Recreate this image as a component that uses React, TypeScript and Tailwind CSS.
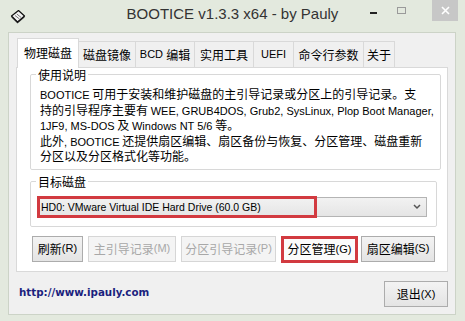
import type { ReactNode } from "react"

const cjk = "font-['Noto_Sans_CJK_SC','Noto_Sans',sans-serif]"

// latin runs are narrower in the original (Tahoma-ish), so give them their own face
const L = ({ children }: { children: ReactNode }) => (
  <span className="font-['Liberation_Sans',sans-serif] text-[11px]">{children}</span>
)

const tabs: { label: ReactNode; w: string; active?: boolean }[] = [
  { label: "物理磁盘", w: "w-[62px]", active: true },
  { label: "磁盘镜像", w: "w-[58px]" },
  { label: <><L>BCD&nbsp;</L>编辑</>, w: "w-[60px]" },
  { label: "实用工具", w: "w-[60px]" },
  { label: <L>UEFI</L>, w: "w-[41px]" },
  { label: "命令行参数", w: "w-[71px]" },
  { label: "关于", w: "w-[32px]" },
]

const DiskIcon = () => (
  <svg width="16" height="16" viewBox="0 0 16 16">
    <path d="M1.5 8.5 L7.5 14.5 L14.5 8.5 L14.5 7 L8.5 1.5 L1.5 7 Z" fill="#3a3a3a" />
    <path d="M1.5 7 L8.5 1.5 L14.5 7 L7.5 13 Z" fill="#f4f4f4" stroke="#111" strokeWidth="1.2" strokeLinejoin="round" />
    <path d="M5 6.5 L9.5 10 M6.8 5 L11.2 8.5" stroke="#777" strokeWidth="1" />
  </svg>
)

const TitleBar = () => (
  <div className="grid h-[32px] grid-cols-[1fr_auto_1fr] items-center">
    <div className="pl-[10px] pt-[1px]">
      <DiskIcon />
    </div>
    <div className="font-['Liberation_Sans',sans-serif] text-[15px] text-[#333] -mt-[3px]">
      BOOTICE v1.3.3 x64 - by Pauly
    </div>
    <div className="flex h-full items-start justify-end pr-[7px]">
      <div className="flex h-[21px] w-[27px] items-center justify-center">
        <div className="mt-[5px] h-[2px] w-[7px] bg-[#222]" />
      </div>
      <div className="mr-[17px] flex h-[21px] w-[28px] items-center justify-center">
        <div className="-mt-[1px] h-[7px] w-[9px] border border-[#9a9a9a]" />
      </div>
      <div className="flex h-[21px] w-[26px] items-center justify-center bg-[#c7c7c7]">
        <svg width="9" height="9" viewBox="0 0 9 9">
          <path d="M1 1 L8 8 M8 1 L1 8" stroke="#fff" strokeWidth="1.6" />
        </svg>
      </div>
    </div>
  </div>
)

const Tabs = () => (
  <div className="relative z-10 flex h-[29px] items-end pl-[1px]">
    {tabs.map((t, i) =>
      t.active ? (
        <div
          key={i}
          className={`${t.w} -mb-px flex h-[30px] items-center justify-center border border-b-0 border-[#d9d9d9] bg-white pb-[2px]`}
        >
          {t.label}
        </div>
      ) : (
        <div
          key={i}
          className={`${t.w} -ml-px flex h-[26px] items-center justify-center border border-b-0 border-[#d9d9d9] bg-[#f0f0f0]`}
        >
          {t.label}
        </div>
      )
    )}
  </div>
)

const Btn = ({ label, keyName, w, disabled }: { label: string; keyName: string; w: string; disabled?: boolean }) => (
  <div
    className={`${w} flex h-[26px] items-center justify-center border ${
      disabled
        ? "border-[#d6d6d6] bg-[#f4f4f4] text-[#a8a8a8]"
        : "border-[#acacac] bg-linear-to-b from-[#f3f3f3] to-[#e4e4e4] text-black"
    }`}
  >
    {label}
    <L>({keyName})</L>
  </div>
)

const Panel = () => (
  <div className="h-[205px] w-[432px] border border-[#d9d9d9] bg-white pl-[13px] pr-[10px]">
    <fieldset className="rounded-[2px] border border-[#d8d8d8] pl-[9px] pr-[6px] pb-[6px]">
      <legend className="-ml-[4px] px-[2px] leading-[13px]">使用说明</legend>
      <div className="whitespace-nowrap pt-[6px] leading-[13.5px]">
        <L>BOOTICE</L> 可用于安装和维护磁盘的主引导记录或分区上的引导记录。支
        <br />
        持的引导程序主要有 <L>WEE, GRUB4DOS, Grub2, SysLinux, Plop Boot Manager,</L>
        <br />
        <L>1JF9, MS-DOS</L> 及 <L>Windows NT 5/6</L> 等。
        <br />
        此外<L>, BOOTICE</L> 还提供扇区编辑、扇区备份与恢复、分区管理、磁盘重新
        <br />
        分区以及分区格式化等功能。
      </div>
    </fieldset>

    <fieldset className="mt-[5px] rounded-[2px] border border-[#d8d8d8] pl-[6px] pr-[9px] pb-[9px]">
      <legend className="-ml-[1px] px-[2px] leading-[13px]">目标磁盘</legend>
      <div className="relative mt-[9px]">
        <div className="flex h-[20px] items-center justify-between border border-[#b4b4b4] bg-linear-to-b from-[#f2f2f2] to-[#e5e5e5] pl-[3px] pr-[5px]">
          <span className="font-['Liberation_Sans',sans-serif] text-[10.5px] leading-[18px]">
            HD0: VMware Virtual IDE Hard Drive (60.0 GB)
          </span>
          <svg width="8" height="6" viewBox="0 0 8 6">
            <path d="M1 1 L4 4 L7 1" fill="none" stroke="#555" strokeWidth="1.5" />
          </svg>
        </div>
        <div className="absolute -top-px left-0 h-[22px] w-[280px] border-[3px] border-[#d23a40]" />
      </div>
    </fieldset>

    <div className="ml-[2px] mt-[9px] flex items-start">
      <Btn label="刷新" keyName="R" w="w-[51px]" />
      <div className="ml-[5px]">
        <Btn label="主引导记录" keyName="M" w="w-[88px]" disabled />
      </div>
      <div className="ml-[5px]">
        <Btn label="分区引导记录" keyName="P" w="w-[95px]" disabled />
      </div>
      <div className="ml-[5px] flex h-[27px] w-[77px] items-center justify-center border-[3px] border-[#d23a40] bg-[#fbfbfb]">
        分区管理<L>(G)</L>
      </div>
      <div className="ml-[3px]">
        <Btn label="扇区编辑" keyName="S" w="w-[74px]" />
      </div>
    </div>
  </div>
)

const Footer = () => (
  <div className="mt-[9px] flex w-[432px] items-start justify-between">
    <div className="mt-[4px] pl-[3px] font-['DejaVu_Sans',sans-serif] text-[10.3px] font-bold leading-[14px] text-[#1b1f7e]">
      http://www.ipauly.com
    </div>
    <Btn label="退出" keyName="X" w="w-[64px] h-[23px]" />
  </div>
)

export default function App() {
  return (
    <div className={`flex h-[321px] w-[465px] flex-col overflow-hidden bg-[#e3e9de] text-[12px] text-black ${cjk}`}>
      <TitleBar />
      <div className="ml-[8px] mr-[9px] h-[283px] border border-[#ccd3c7] bg-[#f0f0f0] px-[7px] pt-[5px]">
        <Tabs />
        <Panel />
        <Footer />
      </div>
    </div>
  )
}
